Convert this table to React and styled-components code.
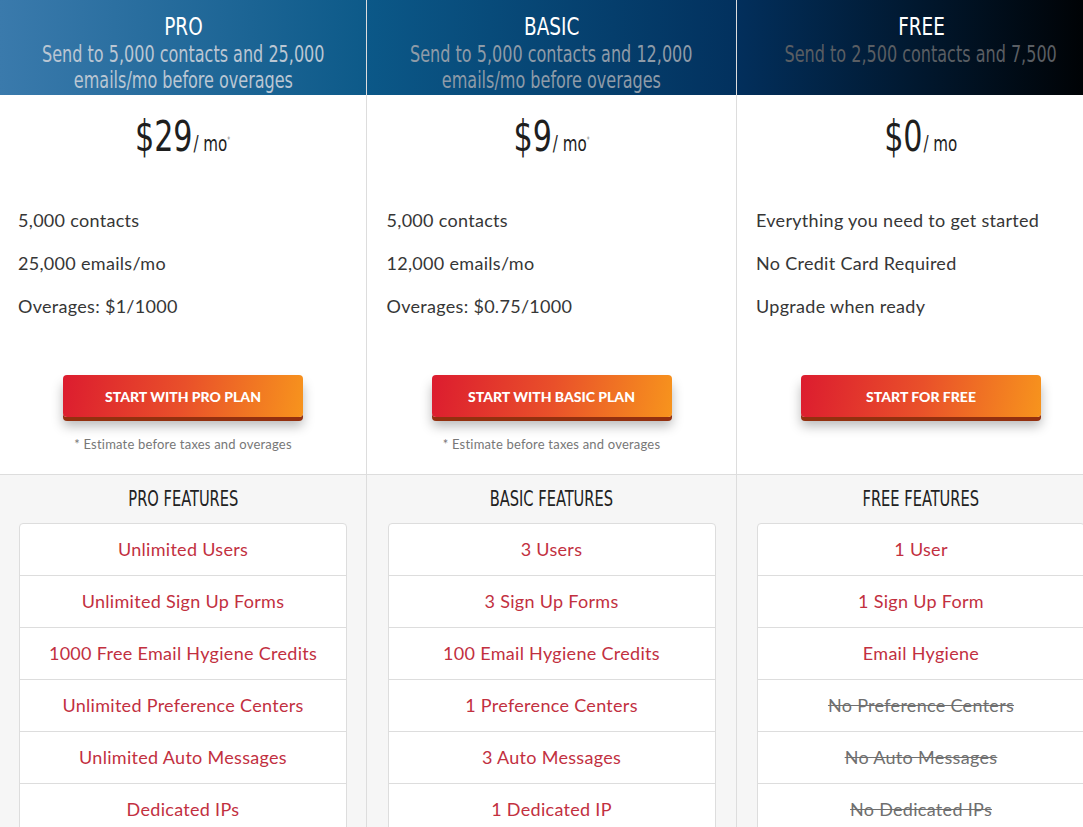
import React from 'react';
import styled, { createGlobalStyle } from 'styled-components';

const GlobalStyle = createGlobalStyle`
  html, body {
    margin: 0;
    padding: 0;
    background: #ffffff;
    overflow: hidden;
  }
`;

const narrow = `"DejaVu Sans Condensed", "DejaVu Sans", sans-serif`;
const body = `"Lato", "Open Sans", sans-serif`;

// no Oswald offline, so squeeze the condensed face a bit more
const Squeeze = styled.span`
  display: inline-block;
  white-space: nowrap;
  transform: scaleX(${p => p.x || 0.8});
  transform-origin: center;
`;

const Table = styled.div`
  display: grid;
  grid-template-columns: 367px 370px 368px;
  width: 1105px;
`;

const Column = styled.div`
  display: flex;
  flex-direction: column;
  border-right: ${p => (p.last ? 'none' : '1px solid #dddddd')};
`;

const Header = styled.div`
  height: 95px;
  box-sizing: border-box;
  padding-top: 12px;
  text-align: center;
  background: ${p => p.bg};
  font-family: ${narrow};
  font-stretch: condensed;
`;

const PlanName = styled.div`
  color: #ffffff;
  font-size: 25px;
  line-height: 29px;
`;

const PlanSub = styled.div`
  color: ${p => p.tone};
  font-size: 23px;
  line-height: 26px;
`;

const Top = styled.div`
  height: 379px;
  box-sizing: border-box;
  background: #ffffff;
  padding-top: 20px;
  display: flex;
  flex-direction: column;
`;

const Price = styled.div`
  text-align: center;
  font-family: ${narrow};
  font-stretch: condensed;
  color: #1e1e1e;
  height: 44px;
`;

const Amount = styled.span`
  font-size: 42px;
  line-height: 44px;
`;

const Per = styled.span`
  font-size: 21px;
  margin-left: 1px;
`;

const Star = styled.sup`
  font-size: 8px;
  color: #888;
  vertical-align: 8px;
`;

const Perks = styled.ul`
  list-style: none;
  width: 330px;
  margin: 40px auto 0;
  padding: 0;
`;

const Perk = styled.li`
  font-family: ${body};
  font-size: 18px;
  line-height: 43px;
  letter-spacing: 0.3px;
  color: #363636;
`;

const CtaWrap = styled.div`
  margin-top: 47px;
  display: flex;
  flex-direction: column;
  align-items: center;
`;

const Cta = styled.button`
  width: 240px;
  height: 42px;
  border: none;
  border-radius: 4px;
  background: linear-gradient(100deg, #dc1c2f 0%, #e9502a 50%, #f7941d 100%);
  color: #ffffff;
  font-family: ${body};
  font-weight: 900;
  font-size: 14px;
  text-transform: uppercase;
  box-shadow: 0 4px 0 #93300f, 0 9px 12px rgba(0, 0, 0, 0.28);
  cursor: pointer;
`;

const Note = styled.div`
  margin-top: 19px;
  font-family: ${body};
  font-size: 13px;
  letter-spacing: 0.2px;
  color: #777777;
`;

const Features = styled.div`
  flex: 1;
  background: #f6f6f6;
  border-top: 1px solid #dddddd;
  height: 360px;
`;

const FeaturesTitle = styled.div`
  font-family: ${narrow};
  font-stretch: condensed;
  font-size: 22px;
  color: #222222;
  text-align: center;
  line-height: 48px;
`;

const FeatureList = styled.ul`
  list-style: none;
  width: 326px;
  margin: 0 auto;
  padding: 0;
  background: #ffffff;
  border: 1px solid #dddddd;
  border-radius: 4px 4px 0 0;
`;

const Feature = styled.li`
  height: 51px;
  line-height: 51px;
  text-align: center;
  font-family: ${body};
  font-size: 18px;
  letter-spacing: 0.3px;
  color: ${p => (p.off ? '#6f6f6f' : '#c2303f')};
  text-decoration: ${p => (p.off ? 'line-through' : 'none')};
  border-top: ${p => (p.first ? 'none' : '1px solid #dddddd')};
`;

const plans = [
  {
    name: 'PRO',
    bg: 'linear-gradient(90deg, #3a7aac 0%, #0d5a89 100%)',
    tone: '#bac6d3',
    sub: ['Send to 5,000 contacts and 25,000', 'emails/mo before overages'],
    price: '$29',
    star: true,
    perks: ['5,000 contacts', '25,000 emails/mo', 'Overages: $1/1000'],
    cta: 'Start with Pro Plan',
    note: true,
    title: 'PRO FEATURES',
    features: [
      ['Unlimited Users'],
      ['Unlimited Sign Up Forms'],
      ['1000 Free Email Hygiene Credits'],
      ['Unlimited Preference Centers'],
      ['Unlimited Auto Messages'],
      ['Dedicated IPs'],
    ],
  },
  {
    name: 'BASIC',
    bg: 'linear-gradient(90deg, #0b5888 0%, #02315e 100%)',
    tone: '#8e9ba8',
    sub: ['Send to 5,000 contacts and 12,000', 'emails/mo before overages'],
    price: '$9',
    star: true,
    perks: ['5,000 contacts', '12,000 emails/mo', 'Overages: $0.75/1000'],
    cta: 'Start with Basic Plan',
    note: true,
    title: 'BASIC FEATURES',
    features: [
      ['3 Users'],
      ['3 Sign Up Forms'],
      ['100 Email Hygiene Credits'],
      ['1 Preference Centers'],
      ['3 Auto Messages'],
      ['1 Dedicated IP'],
    ],
  },
  {
    name: 'FREE',
    bg: 'linear-gradient(90deg, #022f5c 0%, #000000 100%)',
    tone: '#5a5e63',
    sub: ['Send to 2,500 contacts and 7,500'],
    price: '$0',
    star: false,
    perks: ['Everything you need to get started', 'No Credit Card Required', 'Upgrade when ready'],
    cta: 'Start for Free',
    note: false,
    title: 'FREE FEATURES',
    features: [
      ['1 User'],
      ['1 Sign Up Form'],
      ['Email Hygiene'],
      ['No Preference Centers', true],
      ['No Auto Messages', true],
      ['No Dedicated IPs', true],
    ],
  },
];

export default function App() {
  return (
    <>
      <GlobalStyle />
      <Table>
        {plans.map((plan, i) => (
          <Column key={plan.name} last={i === plans.length - 1}>
            <Header bg={plan.bg}>
              <PlanName><Squeeze x={0.82}>{plan.name}</Squeeze></PlanName>
              {plan.sub.map(line => (
                <PlanSub key={line} tone={plan.tone}>
                  <Squeeze x={0.775}>{line}</Squeeze>
                </PlanSub>
              ))}
            </Header>
            <Top>
              <Price>
                <Squeeze x={0.8}>
                  <Amount>{plan.price}</Amount>
                  <Per>/ mo</Per>
                  {plan.star && <Star>*</Star>}
                </Squeeze>
              </Price>
              <Perks>
                {plan.perks.map(p => (
                  <Perk key={p}>{p}</Perk>
                ))}
              </Perks>
              <CtaWrap>
                <Cta>{plan.cta}</Cta>
                {plan.note && <Note>* Estimate before taxes and overages</Note>}
              </CtaWrap>
            </Top>
            <Features>
              <FeaturesTitle><Squeeze x={0.74}>{plan.title}</Squeeze></FeaturesTitle>
              <FeatureList>
                {plan.features.map(([text, off], j) => (
                  <Feature key={text} off={off} first={j === 0}>{text}</Feature>
                ))}
              </FeatureList>
            </Features>
          </Column>
        ))}
      </Table>
    </>
  );
}
